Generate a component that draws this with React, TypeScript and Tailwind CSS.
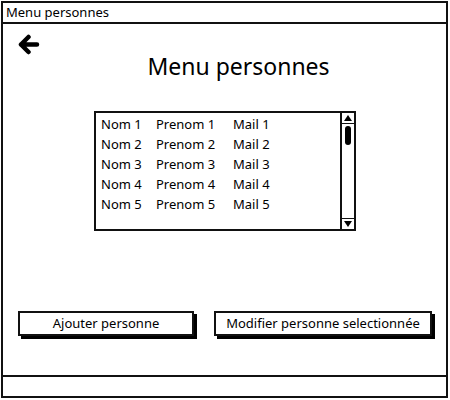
const rows = [1, 2, 3, 4, 5];

export default function App() {
  return (
    <div className="w-[450px] h-[400px] bg-white pt-[1px] pl-[1px]" style={{ fontFamily: '"Noto Sans", sans-serif' }}>
      <div className="w-[447px] h-[397px] border-2 border-[#111] flex flex-col">
        {/* title bar */}
        <div className="h-[21px] border-b-2 border-[#111] flex items-center pl-[3px] text-[13px] text-black leading-none">
          Menu personnes
        </div>

        <div className="flex-1 flex flex-col">
          {/* back arrow */}
          <div className="pt-[10px] pl-[15px] h-[31px]">
            <svg width="22" height="21" viewBox="0 0 22 21" fill="none" stroke="#000" strokeWidth="4.5" strokeLinecap="round" strokeLinejoin="round">
              <path d="M10.5 3 L3 10.5 L10.5 18 M3 10.5 H19" />
            </svg>
          </div>

          <h1 className="-mt-[3px] pl-[28px] text-center text-[23px] leading-[28px] text-black">Menu personnes</h1>

          {/* list */}
          <div className="mt-[31px] ml-[91px] w-[262px] h-[120px] border-2 border-[#111] flex">
            <div className="flex-1 pt-[2px] text-[13px] text-black">
              {rows.map((n) => (
                <div key={n} className="h-[20px] flex items-center pl-[5px]">
                  <span className="w-[55px]">Nom {n}</span>
                  <span className="w-[77px]">Prenom {n}</span>
                  <span>Mail {n}</span>
                </div>
              ))}
            </div>
            <div className="w-[14px] border-l-2 border-[#111] flex flex-col items-center">
              <svg width="10" height="8" viewBox="0 0 10 8" className="mt-[1px]">
                <path d="M1 7 L5 1 L9 7 Z" fill="#000" />
              </svg>
              <div className="w-full border-t border-[#111] mt-[1px]" />
              <div className="mt-[2px] w-[6px] h-[19px] rounded-[3px] bg-black" />
              <div className="flex-1" />
              <div className="w-full border-t border-[#111]" />
              <svg width="10" height="8" viewBox="0 0 10 8" className="mb-[1px] mt-[1px]">
                <path d="M1 1 L5 7 L9 1 Z" fill="#000" />
              </svg>
            </div>
          </div>

          {/* buttons */}
          <div className="mt-[80px] flex pl-[15px] gap-[20px] text-[13px] text-black">
            <button className="w-[176px] h-[25px] border-2 border-[#111] bg-white shadow-[3px_3px_0_#000]">
              Ajouter personne
            </button>
            <button className="w-[218px] h-[25px] border-2 border-[#111] bg-white shadow-[3px_3px_0_#000]">
              Modifier personne selectionnée
            </button>
          </div>
        </div>

        {/* status bar */}
        <div className="h-[21px] border-t-2 border-[#111]" />
      </div>
    </div>
  );
}
